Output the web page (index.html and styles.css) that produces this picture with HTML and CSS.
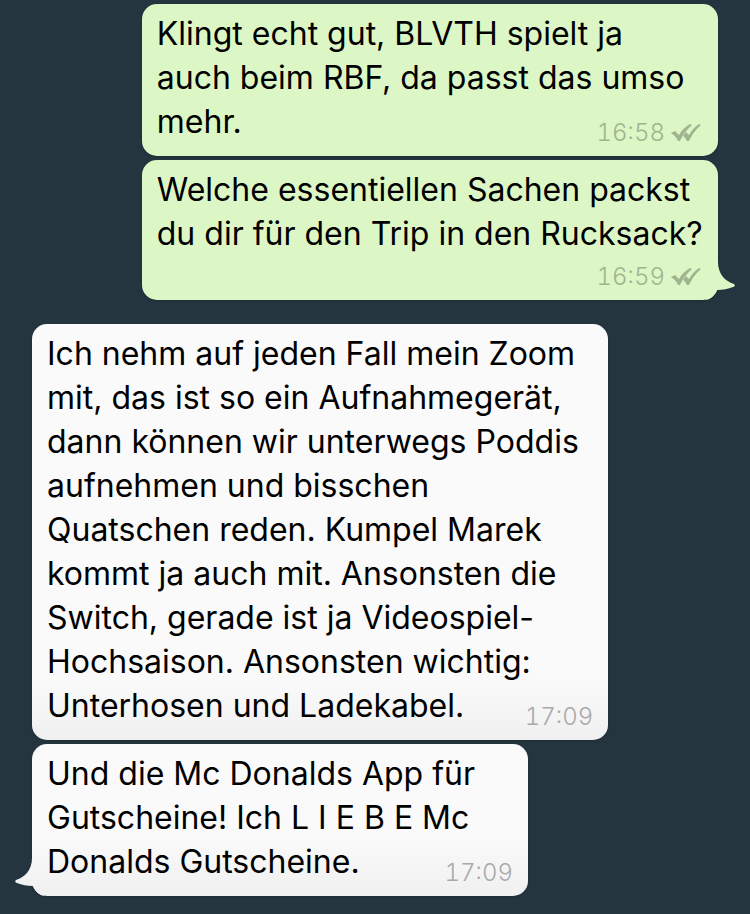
FILE: index.html
```html
<!DOCTYPE html>
<html lang="de">
<head>
<meta charset="UTF-8">
<meta name="viewport" content="width=device-width, initial-scale=1.0">
<title>Chat</title>
<link rel="stylesheet" href="styles.css">
</head>
<body>
<main class="chat">
    <div class="group sent">
        <div class="bubble">
            <p class="text">Klingt echt gut, BLVTH spielt ja<br>auch beim RBF, da passt das umso<br>mehr.</p>
            <div class="meta">
                <time>16:58</time>
                <svg class="ticks" viewBox="0 0 30 20" aria-hidden="true">
                    <path d="M0 10L4 8L8 12Q12 5 19 1L21 2Q13 9 9 18H7Q5 13 0 10Z"/>
                    <path d="M12 13L15 9L18 12Q22 5 28 1L30 2Q22 9 18 18H16Q15 15 12 13Z"/>
                </svg>
            </div>
        </div>
        <div class="bubble">
            <p class="text">Welche essentiellen Sachen packst<br>du dir für den Trip in den Rucksack?</p>
            <div class="meta own-line">
                <time>16:59</time>
                <svg class="ticks" viewBox="0 0 30 20" aria-hidden="true">
                    <path d="M0 10L4 8L8 12Q12 5 19 1L21 2Q13 9 9 18H7Q5 13 0 10Z"/>
                    <path d="M12 13L15 9L18 12Q22 5 28 1L30 2Q22 9 18 18H16Q15 15 12 13Z"/>
                </svg>
            </div>
            <svg class="tail" viewBox="0 0 30 38" aria-hidden="true">
                <path d="M0 0H12C12 12 19 19 28 22Q30 24 27 25C22 27 17 28 11 28Q7 37 0 38Z"/>
            </svg>
        </div>
    </div>
    <div class="group received">
        <div class="bubble">
            <p class="text">Ich nehm auf jeden Fall mein Zoom<br>mit, das ist so ein Aufnahmegerät,<br>dann können wir unterwegs Poddis<br>aufnehmen und bisschen<br>Quatschen reden. Kumpel Marek<br>kommt ja auch mit. Ansonsten die<br>Switch, gerade ist ja Videospiel-<br>Hochsaison. Ansonsten wichtig:<br>Unterhosen und Ladekabel.</p>
            <div class="meta">
                <time>17:09</time>
            </div>
        </div>
        <div class="bubble short">
            <p class="text">Und die Mc Donalds App für<br>Gutscheine! Ich L I E B E Mc<br>Donalds Gutscheine.</p>
            <div class="meta">
                <time>17:09</time>
            </div>
            <svg class="tail" viewBox="0 0 30 38" aria-hidden="true">
                <defs>
                    <linearGradient id="tailShade" x1="0" y1="0" x2="0" y2="1">
                        <stop offset="0" stop-color="#f7f7f8"/>
                        <stop offset="1" stop-color="#f0f0f1"/>
                    </linearGradient>
                </defs>
                <path d="M0 0H12C12 12 19 19 28 22Q30 24 27 25C22 27 17 28 11 28Q7 37 0 38Z"/>
            </svg>
        </div>
    </div>
</main>
</body>
</html>
```
FILE: styles.css
```css
body {
    margin: 0;
    background-color: #24353f;
    color: #000;
    font-family: Inter, "Liberation Sans", sans-serif;
}
.chat {
    display: flex;
    flex-direction: column;
    gap: 24px;
    padding: 4px 32px 18px;
}
.group {
    display: flex;
    flex-direction: column;
    align-items: flex-start;
    gap: 4px;
}
.sent {
    align-items: flex-end;
}
.bubble {
    position: relative;
    box-sizing: border-box;
    width: 84%;
    padding: 8px 0 12px 15px;
    border-radius: 15px;
    box-shadow: 0 1px 2px #1d2d36;
}
.short {
    width: 72.3%;
}
.sent .bubble {
    background-color: #dcf7c5;
}
.received .bubble {
    background: linear-gradient(to top, #f0f0f1, #fafafb 60px);
}
.text {
    margin: 0;
    font-size: 32px;
    line-height: 44px;
    white-space: nowrap;
}
/* time sits in the free corner next to the last line */
.meta {
    position: absolute;
    right: 15px;
    bottom: 8px;
    display: flex;
    align-items: center;
    gap: 6px;
    font-size: 24px;
    font-weight: 300;
    font-variant-numeric: tabular-nums;
    line-height: 30px;
    color: #a9a9ab;
}
.sent .meta {
    right: 17px;
    color: #9fb48f;
}
.sent .own-line {
    position: static;
    justify-content: flex-end;
    padding: 6px 17px 0 0;
    margin-bottom: -4px;
}
.ticks {
    width: 30px;
    height: 20px;
    fill: #9fb48f;
}
/* tail hangs over the bottom corner of the last bubble */
.tail {
    position: absolute;
    right: -18px;
    bottom: 0;
    width: 30px;
    height: 38px;
    fill: #dcf7c5;
}
.received .tail {
    right: auto;
    left: -18px;
    transform: scaleX(-1);
    fill: url(#tailShade);
}
```
